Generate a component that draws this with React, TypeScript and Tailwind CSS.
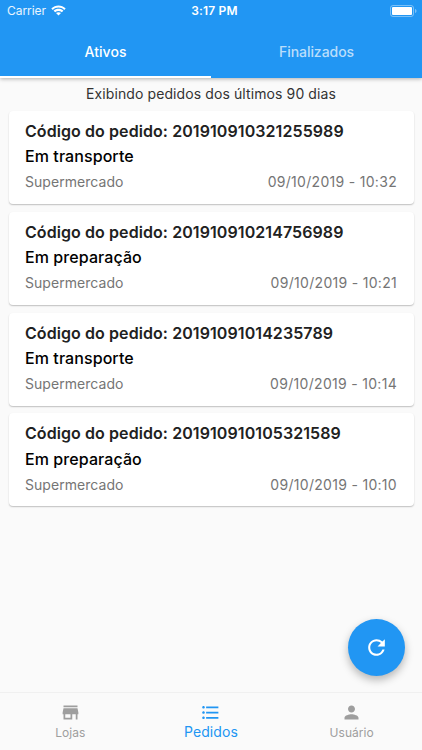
import { useState } from "react";
import type { IconType } from "react-icons";
import { MdFormatListBulleted, MdPerson, MdRefresh, MdStore } from "react-icons/md";

type Order = {
  code: string;
  status: string;
  store: string;
  date: string;
};

const ORDERS: Order[] = [
  { code: "201910910321255989", status: "Em transporte", store: "Supermercado", date: "09/10/2019 - 10:32" },
  { code: "201910910214756989", status: "Em preparação", store: "Supermercado", date: "09/10/2019 - 10:21" },
  { code: "20191091014235789", status: "Em transporte", store: "Supermercado", date: "09/10/2019 - 10:14" },
  { code: "201910910105321589", status: "Em preparação", store: "Supermercado", date: "09/10/2019 - 10:10" },
];

const TABS = ["Ativos", "Finalizados"];

const NAV_ITEMS: { label: string; icon: IconType }[] = [
  { label: "Lojas", icon: MdStore },
  { label: "Pedidos", icon: MdFormatListBulleted },
  { label: "Usuário", icon: MdPerson },
];

function StatusBar() {
  return (
    <div className="grid h-[22px] grid-cols-3 items-center pr-[5px] pl-[7px] text-[12px] leading-none text-white/90">
      <div className="flex items-center gap-[5px]">
        <span className="tracking-[-0.05px]">Carrier</span>
        <svg className="-mt-px h-[11px] w-[15px]" viewBox="0 0 15 11" aria-hidden>
          <path d="M.3 3.4C4.4-.6 10.6-.6 14.7 3.4L13.2 4.9C9.900 1.800 5.100 1.800 1.800 4.900z" fill="white" />
          <path d="M2.6 5.7C5.4 3.1 9.6 3.1 12.4 5.700L10.8 7.300C8.900 5.600 6.100 5.600 4.200 7.300z" fill="white" />
          <path d="M7.5 10.6 5 8.1c1.4-1.3 3.6-1.3 5 0z" fill="white" />
        </svg>
      </div>
      <span className="pl-[5px] text-center font-semibold tracking-[0.2px] text-white">3:17 PM</span>
      <svg className="-mt-px h-[12px] w-[27px] justify-self-end" viewBox="0 0 27 12" aria-hidden>
        <rect x="0.5" y="0.5" width="23" height="11" rx="2.5" fill="none" stroke="white" strokeOpacity="0.4" />
        <rect x="2" y="2" width="20" height="8" rx="1" fill="white" />
        <path d="M25 4v4c1-.4 1.5-1.1 1.5-2s-.5-1.6-1.5-2z" fill="white" fillOpacity="0.4" />
      </svg>
    </div>
  );
}

function OrderCard({ order }: { order: Order }) {
  return (
    <li className="h-[93px] rounded-[4px] bg-white px-[16.5px] pt-[9px] shadow-[0_1px_1.5px_rgba(0,0,0,0.24)]">
      <h2 className="text-[16px] leading-[22px] font-semibold tracking-[0.08px] whitespace-nowrap text-[#212121]">
        Código do pedido: {order.code}
      </h2>
      <p className="mt-[3.4px] text-[16px] leading-[22px] font-[450] tracking-[0.08px] text-black">{order.status}</p>
      <div className="mt-[5.1px] flex justify-between text-[14px] leading-5 text-[#757575]">
        <span className="tracking-[0.05px]">{order.store}</span>
        <span className="tracking-[0.3px]">{order.date}</span>
      </div>
    </li>
  );
}

export default function App() {
  const [tab, setTab] = useState(0);
  const [page, setPage] = useState(1);

  return (
    <div className="relative flex h-[750px] w-full flex-col overflow-hidden bg-[#fafafa] font-['Inter',sans-serif]">
      <header className="z-10 h-[78px] bg-[#2196f3] shadow-[0_1px_4px_rgba(0,0,0,0.3)]">
        <StatusBar />
        <div className="grid h-[55.5px] grid-cols-2" role="tablist">
          {TABS.map((label, i) => (
            <button
              key={label}
              type="button"
              role="tab"
              aria-selected={tab === i}
              onClick={() => setTab(i)}
              className={
                tab === i
                  ? "border-b-2 border-white pt-[5px] text-[14px] font-medium tracking-[0.05px] text-white"
                  : "border-b-2 border-transparent pt-[5px] text-[14px] font-medium tracking-[-0.05px] text-white/70"
              }
            >
              {label}
            </button>
          ))}
        </div>
      </header>

      <main className="flex-1">
        <p className="pt-1.5 text-center text-[14px] leading-5 tracking-[0.1px] text-[#333333]">
          Exibindo pedidos dos últimos 90 dias
        </p>
        <ul className="mt-[7px] flex flex-col gap-[7.8px] px-[8.5px]">
          {ORDERS.map((order) => (
            <OrderCard key={order.code} order={order} />
          ))}
        </ul>
      </main>

      <button
        type="button"
        aria-label="Atualizar"
        className="absolute right-[17px] bottom-[74px] flex size-[57px] items-center justify-center rounded-full bg-[#2196f3] text-white shadow-[0_4px_9px_rgba(0,0,0,0.28)]"
      >
        <MdRefresh size={25} />
      </button>

      <nav className="grid h-[58px] grid-cols-3 border-t border-[#f0f0f0] bg-[#fafafa]">
        {NAV_ITEMS.map(({ label, icon: Icon }, i) => (
          <button
            key={label}
            type="button"
            onClick={() => setPage(i)}
            className={
              page === i
                ? "flex flex-col items-center pt-[9px] text-[#2196f3]"
                : "flex flex-col items-center pt-[9px] text-[#9e9e9e]"
            }
          >
            <Icon size={21} />
            <span
              className={
                page === i
                  ? "text-[14px] leading-[18px] tracking-[0.1px]"
                  : "mt-px text-[12px] leading-[18px] tracking-[0.05px]"
              }
            >
              {label}
            </span>
          </button>
        ))}
      </nav>
    </div>
  );
}
